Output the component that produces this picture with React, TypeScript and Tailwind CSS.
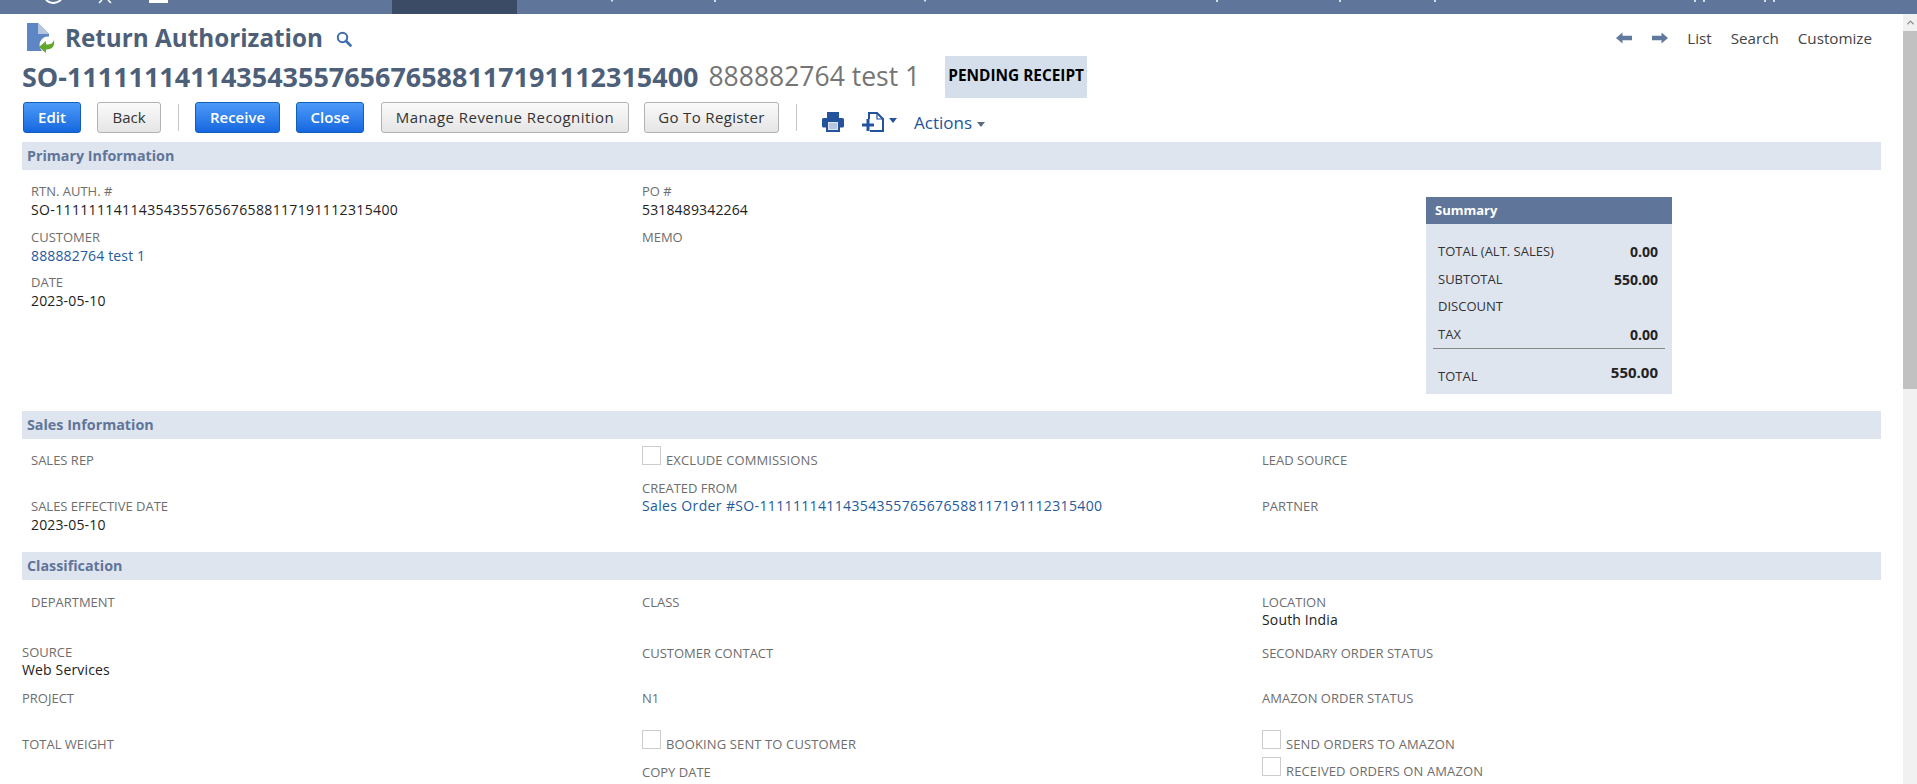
import React from 'react';
import { ChevronUp } from 'lucide-react';

const FONT = "font-['Open_Sans','Noto_Sans',sans-serif]";
const RMA = 'SO-11111114114354355765676588117191112315400';

// label on top, optional value below
const Field = ({ label, value, link, flush, gap, long, className = '' }: { label: string; value?: string; link?: boolean; flush?: boolean; gap?: boolean; long?: boolean; className?: string }) => (
  <div className={`${flush ? '' : 'pl-[9px]'} ${className}`}>
    <div className="text-[13px] leading-[18px] text-[#6e6e6e]">{label}</div>
    {value && (
      <div
        className={`text-[14px] leading-[18px] ${gap ? 'mt-[1px]' : ''} ${long ? 'tracking-[0.36px]' : 'tracking-[0.15px]'} ${
          link ? 'text-[#255a9b]' : 'text-[#222222]'
        }`}
      >
        {value}
      </div>
    )}
  </div>
);

const CheckField = ({ label, className = '' }: { label: string; className?: string }) => (
  <div className={`flex items-start pl-[9px] h-[19px] ${className}`}>
    <span className="w-[19px] h-[19px] border border-[#cccccc] bg-white shrink-0" />
    <span className="ml-[5px] mt-[5px] text-[13px] leading-[18px] tracking-[0.12px] text-[#6e6e6e] whitespace-nowrap">{label}</span>
  </div>
);

const SectionBar = ({ title }: { title: string }) => (
  <div className="h-[28px] bg-[#dfe5ef] pl-[5px] pb-[1px] flex items-center text-[14.3px] font-bold text-[#5f7599]">{title}</div>
);

const Btn = ({ children, primary, className = '' }: { children: React.ReactNode; primary?: boolean; className?: string }) => (
  <button
    className={`h-[31px] shrink-0 rounded-[3px] border text-[15px] whitespace-nowrap ${
      primary
        ? 'font-semibold border-[#125fb5] bg-gradient-to-b from-[#4c9af8] to-[#1467e0] text-white'
        : 'font-medium border-[#b2b2b2] bg-gradient-to-b from-[#fafafa] to-[#e5e5e5] text-[#333333]'
    } ${className}`}
  >
    {children}
  </button>
);

const SummaryRow = ({ label, value }: { label: string; value?: string }) => (
  <div className="flex justify-between items-center h-[27.5px] pl-[12px] pr-[14px]">
    <span className="text-[13px] text-[#333333]">{label}</span>
    {value && <span className="text-[14px] font-bold text-[#222222]">{value}</span>}
  </div>
);

const PageIcon = () => (
  <svg width="29" height="31" viewBox="0 0 29 31" className="shrink-0">
    <path d="M0 0H11L22 11V28H0Z" fill="#5f86c4" />
    <path d="M11 0L22 11H11Z" fill="#b5c6e0" />
    <circle cx="21" cy="22" r="8.5" fill="#ffffff" />
    <path d="M27 17C28 23 25 27 19 26.5V30L12 24L19 18V21.5C23 22 26 20.5 27 17Z" fill="#62a82c" />
  </svg>
);

const SearchIcon = () => (
  <svg width="16" height="16" viewBox="0 0 16 16" className="ml-[13px] mt-[1px]">
    <circle cx="6.5" cy="6.5" r="4.7" fill="none" stroke="#3f6cab" strokeWidth="2" />
    <path d="M10 10L14.5 14.5" stroke="#3f6cab" strokeWidth="2.6" strokeLinecap="round" />
  </svg>
);

const ArrowIcon = ({ flip }: { flip?: boolean }) => (
  <svg width="16" height="12" viewBox="0 0 16 12" className={flip ? 'rotate-180' : ''}>
    <path d="M0 6L6.5 0.5V3.8H16V8.2H6.5V11.5Z" fill="#607a9f" />
  </svg>
);

const PrintIcon = () => (
  <svg width="22" height="20" viewBox="0 0 22 20">
    <path d="M5 0H17V6H5Z" fill="#22539b" />
    <path d="M1.5 6H20.5Q22 6 22 7.5V14Q22 15.5 20.5 15.5H18V20H4V15.5H1.5Q0 15.5 0 14V7.5Q0 6 1.5 6Z" fill="#22539b" />
    <path d="M6 10H16V18H6Z" fill="#dbe4f1" />
    <path d="M7 12H15M7 14H15M7 16H15" stroke="#8ea8cc" strokeWidth="1" />
  </svg>
);

const NewDocIcon = () => (
  <svg width="22" height="20" viewBox="0 0 22 20">
    <path d="M7 7V1H15L21 7V19H8" fill="none" stroke="#22539b" strokeWidth="2" />
    <path d="M15 1V7H21" fill="none" stroke="#22539b" strokeWidth="1.2" />
    <path d="M0 13H12M6 7V19" stroke="#22539b" strokeWidth="3" />
  </svg>
);

const Caret = ({ color, className = '' }: { color: string; className?: string }) => (
  <svg width="8" height="5" viewBox="0 0 8 5" className={className}>
    <path d="M0 0H8L4 5Z" fill={color} />
  </svg>
);

const App: React.FC = () => {
  return (
    <div className={`h-[784px] w-[1917px] overflow-hidden bg-white flex flex-col ${FONT}`}>
      {/* top nav, only the bottom edge is on screen */}
      <div className="relative h-[14px] shrink-0 bg-[#5f7599]">
        <div className="ml-[392px] w-[125px] h-full bg-[#3b4a65]" />
        <svg width="1917" height="4" className="absolute left-0 top-0">
          <path d="M46 0Q53 6 61 0" fill="none" stroke="#ffffff" strokeWidth="2" />
          <path d="M99 3L102 0M111 3L108 0" stroke="#ffffff" strokeWidth="1.5" />
          <rect x="149" y="0" width="19" height="3" fill="#ffffff" />
          <path d="M612 0V1.5M715 0V2M925 0V1.5M1217 0V2M1340 0V2M1435 0V2M1695 0V2M1704 0V2M1765 0V2M1774 0V2" stroke="#ffffff" strokeWidth="1.5" />
        </svg>
      </div>

      <div className="flex flex-1 min-h-0">
        <main className="flex-1 min-w-0 px-[22px]">
          <div className="h-[42px] pt-[6px] flex items-center justify-between">
            <div className="flex items-center pl-[5px]">
              <PageIcon />
              <h1 className="ml-[9px] text-[24.25px] font-bold text-[#4d5f79]">Return Authorization</h1>
              <SearchIcon />
            </div>
            <div className="flex items-center pr-[9px] text-[15.2px] text-[#444444]">
              <ArrowIcon />
              <span className="ml-[20px]"><ArrowIcon flip /></span>
              <a className="ml-[19px]">List</a>
              <a className="ml-[19px]">Search</a>
              <a className="ml-[19px]">Customize</a>
            </div>
          </div>

          <div className="h-[42px] flex items-center whitespace-nowrap">
            <span className="text-[26.95px] font-bold text-[#4d5f79]">{RMA}</span>
            <span className="ml-[10px] text-[26.5px] text-[#757575]">888882764 test 1</span>
            <span className="ml-[25px] pb-[2px] h-full w-[142px] shrink-0 bg-[#d5dfec] flex items-center justify-center text-[15.4px] font-bold text-black">PENDING RECEIPT</span>
          </div>

          <div className="mt-[4px] h-[31px] flex items-center">
            <Btn primary className="ml-[1px] w-[58px]">Edit</Btn>
            <Btn className="ml-[16px] w-[64px]">Back</Btn>
            <span className="ml-[17px] h-[27px] w-px bg-[#c4c4c4]" />
            <Btn primary className="ml-[16px] w-[85px]">Receive</Btn>
            <Btn primary className="ml-[16px] w-[68px]">Close</Btn>
            <Btn className="ml-[17px] w-[248px] tracking-[0.46px]">Manage Revenue Recognition</Btn>
            <Btn className="ml-[15px] w-[135px] tracking-[0.35px]">Go To Register</Btn>
            <span className="ml-[17px] h-[27px] w-px bg-[#c4c4c4]" />
            <span className="ml-[25px] mt-[9px]"><PrintIcon /></span>
            <span className="ml-[18px] mt-[9px]"><NewDocIcon /></span>
            <Caret color="#22539b" className="ml-[5px] mt-[6px]" />
            <span className="ml-[17px] mt-[11px] text-[17px] text-[#255599]">Actions</span>
            <Caret color="#5a6a80" className="ml-[5px] mt-[14px]" />
          </div>

          <div className="mt-[9px]">
            <SectionBar title="Primary Information" />
            <div className="grid grid-cols-[611px_620px_1fr] h-[241px]">
              <div className="pt-[12px]">
                <Field gap long label="RTN. AUTH. #" value={RMA} />
                <Field gap label="CUSTOMER" value="888882764 test 1" link className="mt-[9px]" />
                <Field gap label="DATE" value="2023-05-10" className="mt-[8px]" />
              </div>
              <div className="pt-[12px]">
                <Field gap label="PO #" value="5318489342264" />
                <Field label="MEMO" className="mt-[9px]" />
              </div>
              <div className="pt-[27px] pl-[173px]">
                <div className="w-[246px] h-[197px] bg-[#dfe5ef]">
                  <div className="h-[27px] bg-[#5f7599] pl-[9px] pt-[1px] flex items-center text-[13px] font-bold text-white">Summary</div>
                  <div className="pt-[14px]">
                    <SummaryRow label="TOTAL (ALT. SALES)" value="0.00" />
                    <SummaryRow label="SUBTOTAL" value="550.00" />
                    <SummaryRow label="DISCOUNT" />
                    <SummaryRow label="TAX" value="0.00" />
                  </div>
                  <div className="mx-[7px] border-t border-[#888888]" />
                  <div className="flex justify-between pl-[12px] pr-[14px] pt-[12px]">
                    <span className="mt-[6px] text-[13px] text-[#333333]">TOTAL</span>
                    <span className="text-[15px] font-bold text-[#222222]">550.00</span>
                  </div>
                </div>
              </div>
            </div>
          </div>

          <SectionBar title="Sales Information" />
          <div className="grid grid-cols-[611px_620px_1fr] h-[113px]">
            <div className="pt-[12px]">
              <Field label="SALES REP" />
              <Field gap label="SALES EFFECTIVE DATE" value="2023-05-10" className="mt-[28px]" />
            </div>
            <div className="pt-[7px]">
              <CheckField label="EXCLUDE COMMISSIONS" />
              <Field long label="CREATED FROM" value={`Sales Order #${RMA}`} link className="mt-[14px]" />
            </div>
            <div className="pt-[12px]">
              <Field label="LEAD SOURCE" />
              <Field label="PARTNER" className="mt-[28px]" />
            </div>
          </div>

          <SectionBar title="Classification" />
          <div className="grid grid-cols-[611px_620px_1fr]">
            <div className="pt-[13px]">
              <Field label="DEPARTMENT" />
              <Field flush label="SOURCE" value="Web Services" className="mt-[32px]" />
              <Field flush label="PROJECT" className="mt-[10px]" />
              <Field flush label="TOTAL WEIGHT" className="mt-[28px]" />
            </div>
            <div className="pt-[13px]">
              <Field label="CLASS" />
              <Field label="CUSTOMER CONTACT" className="mt-[33px]" />
              <Field label="N1" className="mt-[27px]" />
              <CheckField label="BOOKING SENT TO CUSTOMER" className="mt-[23px]" />
              <Field label="COPY DATE" className="mt-[14px]" />
            </div>
            <div className="pt-[13px]">
              <Field label="LOCATION" value="South India" />
              <Field label="SECONDARY ORDER STATUS" className="mt-[15px]" />
              <Field label="AMAZON ORDER STATUS" className="mt-[27px]" />
              <CheckField label="SEND ORDERS TO AMAZON" className="mt-[23px]" />
              <CheckField label="RECEIVED ORDERS ON AMAZON" className="mt-[8px]" />
            </div>
          </div>
        </main>

        {/* page scrollbar */}
        <div className="w-[14px] shrink-0 bg-[#f1f1f1] flex flex-col">
          <div className="h-[17px] flex items-center justify-center text-[#8a8a8a]">
            <ChevronUp size={11} strokeWidth={3} />
          </div>
          <div className="h-[358px] bg-[#c1c1c1]" />
        </div>
      </div>
    </div>
  );
};

export default App;
